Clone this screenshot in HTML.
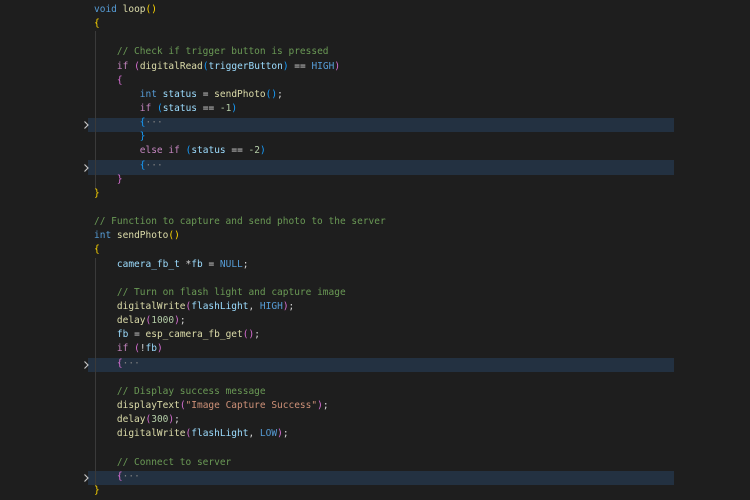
<!DOCTYPE html>
<html><head><meta charset="utf-8"><style>
html,body{margin:0;padding:0;background:#1e1e1e;width:750px;height:500px;overflow:hidden}
#c{position:absolute;left:94px;top:3px;font-family:"DejaVu Sans Mono","Liberation Mono",monospace;font-size:9.5px;line-height:14.15px;color:#d4d4d4;white-space:pre}
.l{height:14.15px;position:relative}
.hl{position:absolute;left:88px;width:586px;height:14.15px;background:#233141}
.ch{position:absolute;left:82px;width:8px;height:10px}
.guide{position:absolute;left:95px;width:1px;background:#3a3a3a}
.k{color:#569cd6}.p{color:#c586c0}.f{color:#dcdcaa}.v{color:#9cdcfe}.c{color:#6a9955}.n{color:#b5cea8}.s{color:#ce9178}
.b1{color:#ffd700}.b2{color:#da70d6}.b3{color:#179fff}.m{color:#569cd6}.d{color:#808080}
</style></head><body>
<div class="hl" style="top:117.9px"></div>
<div class="hl" style="top:160.4px"></div>
<div class="hl" style="top:357.5px"></div>
<div class="hl" style="top:470.6px"></div>
<svg class="ch" style="top:120px" viewBox="0 0 8 10"><path d="M2.5 1.5L6 5L2.5 8.5" fill="none" stroke="#c5c5c5" stroke-width="1.2"/></svg>
<svg class="ch" style="top:162.5px" viewBox="0 0 8 10"><path d="M2.5 1.5L6 5L2.5 8.5" fill="none" stroke="#c5c5c5" stroke-width="1.2"/></svg>
<svg class="ch" style="top:359.6px" viewBox="0 0 8 10"><path d="M2.5 1.5L6 5L2.5 8.5" fill="none" stroke="#c5c5c5" stroke-width="1.2"/></svg>
<svg class="ch" style="top:472.7px" viewBox="0 0 8 10"><path d="M2.5 1.5L6 5L2.5 8.5" fill="none" stroke="#c5c5c5" stroke-width="1.2"/></svg>
<div class="guide" style="top:31px;height:158px"></div>
<div class="guide" style="top:258px;height:228px"></div>
<div id="c"><div class="l"><span class="k">void</span> <span class="f">loop</span><span class="b1">()</span></div><div class="l"><span class="b1">{</span></div><div class="l"> </div><div class="l">    <span class="c">// Check if trigger button is pressed</span></div><div class="l">    <span class="p">if</span> <span class="b2">(</span><span class="f">digitalRead</span><span class="b3">(</span><span class="v">triggerButton</span><span class="b3">)</span> == <span class="m">HIGH</span><span class="b2">)</span></div><div class="l">    <span class="b2">{</span></div><div class="l">        <span class="k">int</span> <span class="v">status</span> = <span class="f">sendPhoto</span><span class="b3">()</span>;</div><div class="l">        <span class="p">if</span> <span class="b3">(</span><span class="v">status</span> == <span class="n">-1</span><span class="b3">)</span></div><div class="l">        <span class="b3">{</span><span class="d">···</span></div><div class="l">        <span class="b3">}</span></div><div class="l">        <span class="p">else</span> <span class="p">if</span> <span class="b3">(</span><span class="v">status</span> == <span class="n">-2</span><span class="b3">)</span></div><div class="l">        <span class="b3">{</span><span class="d">···</span></div><div class="l">    <span class="b2">}</span></div><div class="l"><span class="b1">}</span></div><div class="l"> </div><div class="l"><span class="c">// Function to capture and send photo to the server</span></div><div class="l"><span class="k">int</span> <span class="f">sendPhoto</span><span class="b1">()</span></div><div class="l"><span class="b1">{</span></div><div class="l">    <span class="v">camera_fb_t</span> *<span class="v">fb</span> = <span class="m">NULL</span>;</div><div class="l"> </div><div class="l">    <span class="c">// Turn on flash light and capture image</span></div><div class="l">    <span class="f">digitalWrite</span><span class="b2">(</span><span class="v">flashLight</span>, <span class="m">HIGH</span><span class="b2">)</span>;</div><div class="l">    <span class="f">delay</span><span class="b2">(</span><span class="n">1000</span><span class="b2">)</span>;</div><div class="l">    <span class="v">fb</span> = <span class="f">esp_camera_fb_get</span><span class="b2">()</span>;</div><div class="l">    <span class="p">if</span> <span class="b2">(</span>!<span class="v">fb</span><span class="b2">)</span></div><div class="l">    <span class="b2">{</span><span class="d">···</span></div><div class="l"> </div><div class="l">    <span class="c">// Display success message</span></div><div class="l">    <span class="f">displayText</span><span class="b2">(</span><span class="s">"Image Capture Success"</span><span class="b2">)</span>;</div><div class="l">    <span class="f">delay</span><span class="b2">(</span><span class="n">300</span><span class="b2">)</span>;</div><div class="l">    <span class="f">digitalWrite</span><span class="b2">(</span><span class="v">flashLight</span>, <span class="m">LOW</span><span class="b2">)</span>;</div><div class="l"> </div><div class="l">    <span class="c">// Connect to server</span></div><div class="l">    <span class="b2">{</span><span class="d">···</span></div><div class="l"><span class="b1">}</span></div></div>
</body></html>
